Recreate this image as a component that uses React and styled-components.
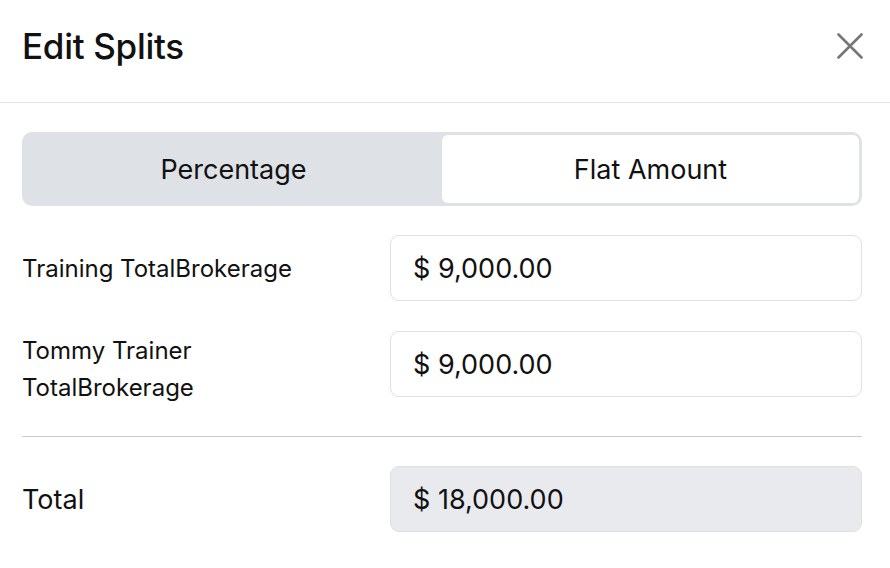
import React, { useState } from "react";
import styled, { createGlobalStyle } from "styled-components";

const GlobalStyle = createGlobalStyle`
  html, body {
    margin: 0;
    padding: 0;
    background: #fff;
  }
  body {
    font-family: "Inter", "Liberation Sans", sans-serif;
    color: #111;
  }
`;

const Modal = styled.div`
  width: 890px;
  height: 568px;
  background: #fff;
  display: flex;
  flex-direction: column;
`;

const Header = styled.div`
  height: 103px;
  box-sizing: border-box;
  padding: 0 27px 10px 22px;
  display: flex;
  align-items: center;
  justify-content: space-between;
  border-bottom: 1px solid #e3e4e8;
`;

const Title = styled.h2`
  margin: 0;
  font-size: 35px;
  font-weight: 500;
  letter-spacing: -0.3px;
  color: #111;
`;

const CloseButton = styled.button`
  border: none;
  background: none;
  padding: 0;
  width: 26px;
  height: 26px;
  display: flex;
  align-items: center;
  justify-content: center;
  cursor: pointer;
`;

const Body = styled.div`
  padding: 29px 28px 0 22px;
  display: flex;
  flex-direction: column;
`;

const Toggle = styled.div`
  display: flex;
  height: 74px;
  box-sizing: border-box;
  padding: 3px;
  background: #dee1e6;
  border-radius: 10px;
  margin-bottom: 29px;
`;

const Tab = styled.button`
  flex: 1;
  border: none;
  border-radius: 6px;
  font-family: inherit;
  font-size: 27px;
  color: #111;
  cursor: pointer;
  background: ${(p) => (p.$active ? "#fff" : "transparent")};
`;

const Row = styled.div`
  display: flex;
  align-items: center;
  height: 66px;
  margin-bottom: 30px;
`;

const Label = styled.div`
  width: 368px;
  flex-shrink: 0;
  font-size: ${(p) => (p.$big ? "27px" : "24px")};
  line-height: 37px;
  margin-top: ${(p) => (p.$multi ? "10px" : "0")};
  color: #111;
`;

const Amount = styled.div`
  flex: 1;
  height: 66px;
  box-sizing: border-box;
  display: flex;
  align-items: center;
  padding: 0 22px;
  border: 1px solid #dfe0e4;
  border-radius: 9px;
  font-size: 27px;
  color: #111;
  background: ${(p) => (p.$readOnly ? "#e9eaee" : "#fff")};
`;

const Divider = styled.hr`
  border: none;
  border-top: 1px solid #cbcbcd;
  margin: 9px 0 29px 0;
`;

const XIcon = () => (
  <svg width="26" height="26" viewBox="0 0 26 26">
    <path
      d="M1.5 1.5 L24.5 24.5 M24.5 1.5 L1.5 24.5"
      stroke="#777"
      strokeWidth="2.6"
      strokeLinecap="round"
    />
  </svg>
);

const splits = [
  { name: "Training TotalBrokerage", amount: "$ 9,000.00" },
  { name: "Tommy Trainer\nTotalBrokerage", amount: "$ 9,000.00" },
];

const App = () => {
  const [mode, setMode] = useState("flat");
  return (
    <Modal>
      <GlobalStyle />
      <Header>
        <Title>Edit Splits</Title>
        <CloseButton aria-label="Close">
          <XIcon />
        </CloseButton>
      </Header>
      <Body>
        <Toggle>
          <Tab $active={mode === "percent"} onClick={() => setMode("percent")}>
            Percentage
          </Tab>
          <Tab $active={mode === "flat"} onClick={() => setMode("flat")}>
            Flat Amount
          </Tab>
        </Toggle>
        {splits.map((s, i) => {
          const lines = s.name.split("\n");
          return (
            <Row key={i}>
              <Label $multi={lines.length > 1}>
                {lines.map((line, j) => (
                  <div key={j}>{line}</div>
                ))}
              </Label>
              <Amount>{s.amount}</Amount>
            </Row>
          );
        })}
        <Divider />
        <Row>
          <Label $big>Total</Label>
          <Amount $readOnly>$ 18,000.00</Amount>
        </Row>
      </Body>
    </Modal>
  );
};

export default App;
